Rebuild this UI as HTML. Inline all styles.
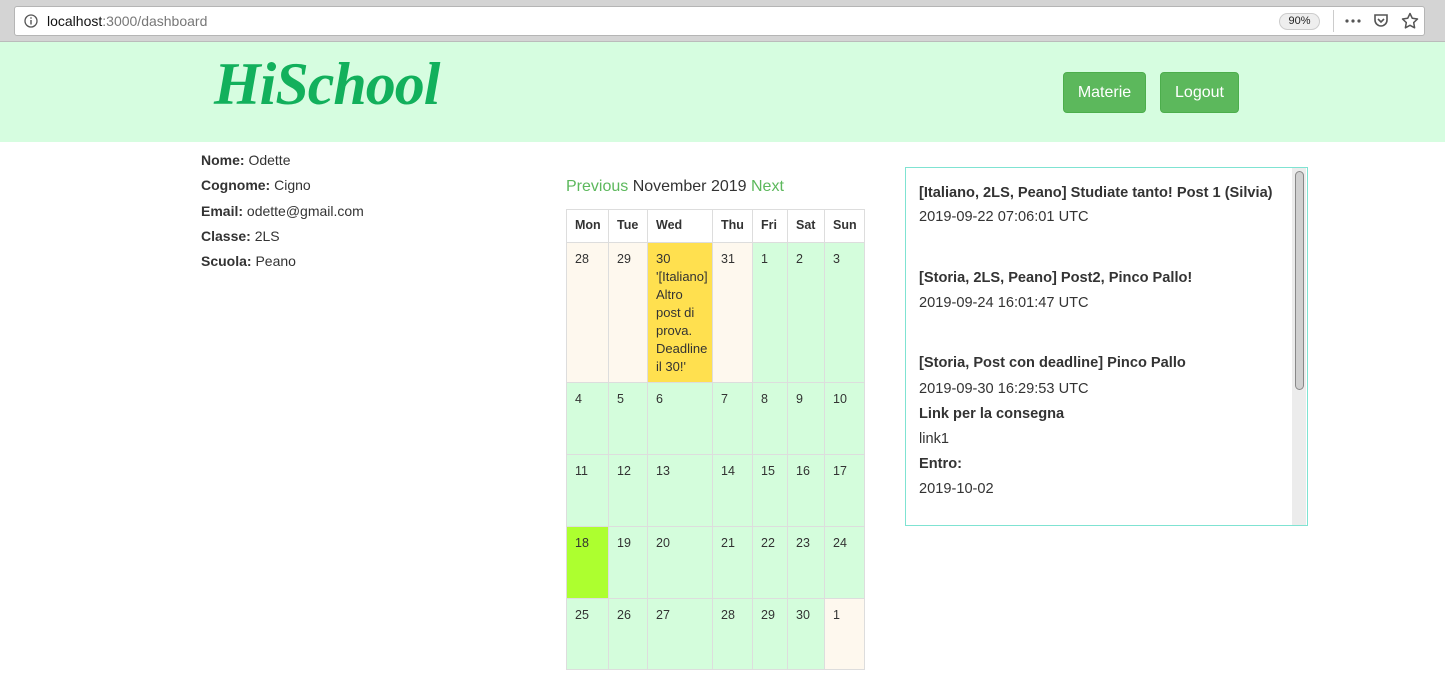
<!DOCTYPE html>
<html><head><meta charset="utf-8"><style>
*{margin:0;padding:0;box-sizing:border-box}
body{width:1445px;height:684px;overflow:hidden;background:#fff;font-family:"Liberation Sans",sans-serif;color:#333;position:relative}
.chrome{position:absolute;left:0;top:0;width:1445px;height:42px;background:#d4d4d4;border-bottom:1px solid #bbb}
.url{position:absolute;left:14px;top:6px;width:1411px;height:30px;background:#fff;border:1px solid #b5b5b5;border-radius:3px}
.hdr{position:absolute;left:0;top:42px;width:1445px;height:100px;background:#d6fde0}
.logo{position:absolute;left:214px;top:50px;font-family:"Liberation Serif",serif;font-style:italic;font-weight:bold;font-size:60px;color:#12b05c;letter-spacing:-1px}
.btn{position:absolute;top:72px;height:41px;background:#5cb85c;border:1px solid #4cae4c;border-radius:4px;color:#fff;font-size:16px;line-height:39px;text-align:center}
.info{position:absolute;left:201px;font-size:14px}
.c{position:absolute;border:1px solid #ddd;font-size:12.5px;line-height:18px;padding:7px 0 0 8px}
.h{font-weight:bold;padding-top:6px}
.o{background:#fef8ee}.g{background:#d4fddc}.y{background:#ffe04f}.t{background:#adff2f}
.panel{position:absolute;left:905px;top:167px;width:403px;height:359px;border:1px solid #7fe3d2;font-size:14.6px}
.panel div{position:absolute;left:13px}
.sb{position:absolute;left:1292px;top:168px;width:14px;height:357px;background:#ececec}
.th{position:absolute;left:1295px;top:171px;width:9px;height:219px;background:#d0d0d0;border:1px solid #888;border-radius:5px}
</style></head><body>
<div class="chrome"><div class="url">
<svg style="position:absolute;left:9px;top:7px" width="14" height="14" viewBox="0 0 14 14"><circle cx="7" cy="7" r="6" fill="none" stroke="#555" stroke-width="1.3"/><rect x="6.3" y="6" width="1.4" height="4.5" fill="#555"/><rect x="6.3" y="3.3" width="1.4" height="1.4" fill="#555"/></svg>
<span style="position:absolute;left:32px;top:6px;font-size:14px;color:#111">localhost<span style="color:#777">:3000/dashboard</span></span>
<span style="position:absolute;left:1264px;top:6px;width:41px;height:17px;border:1px solid #ccc;border-radius:9px;background:#eee;font-size:11px;text-align:center;line-height:15px;color:#222">90%</span>
<span style="position:absolute;left:1318px;top:3px;width:1px;height:22px;background:#ccc"></span>
<svg style="position:absolute;left:1330px;top:12px" width="16" height="4"><circle cx="2" cy="2" r="1.6" fill="#555"/><circle cx="8" cy="2" r="1.6" fill="#555"/><circle cx="14" cy="2" r="1.6" fill="#555"/></svg>
<svg style="position:absolute;left:1358px;top:6px" width="16" height="16" viewBox="0 0 16 16"><path d="M2 2h12v5a6 6 0 0 1-12 0z" fill="none" stroke="#555" stroke-width="1.6"/><path d="M5 6l3 3 3-3" fill="none" stroke="#555" stroke-width="1.6"/></svg>
<svg style="position:absolute;left:1386px;top:5px" width="18" height="18" viewBox="0 0 18 18"><path d="M9 1.5l2.3 4.8 5.2.7-3.8 3.6.9 5.2L9 13.3l-4.6 2.5.9-5.2L1.5 7l5.2-.7z" fill="none" stroke="#555" stroke-width="1.5" stroke-linejoin="round"/></svg>
</div></div>
<div class="hdr"></div>
<div class="logo">HiSchool</div>
<div class="btn" style="left:1063px;width:83px">Materie</div>
<div class="btn" style="left:1160px;width:79px">Logout</div>

<div class="info" style="top:152px"><b>Nome:</b> Odette</div>
<div class="info" style="top:177px"><b>Cognome:</b> Cigno</div>
<div class="info" style="top:203px"><b>Email:</b> odette@gmail.com</div>
<div class="info" style="top:228px"><b>Classe:</b> 2LS</div>
<div class="info" style="top:253px"><b>Scuola:</b> Peano</div>

<div style="position:absolute;left:566px;top:178px;font-size:16px"><span style="color:#5cb85c">Previous</span> November 2019 <span style="color:#5cb85c">Next</span></div>

<div class="c h" style="left:566px;top:209px;width:43px;height:34px">Mon</div>
<div class="c h" style="left:608px;top:209px;width:40px;height:34px">Tue</div>
<div class="c h" style="left:647px;top:209px;width:66px;height:34px">Wed</div>
<div class="c h" style="left:712px;top:209px;width:41px;height:34px">Thu</div>
<div class="c h" style="left:752px;top:209px;width:36px;height:34px">Fri</div>
<div class="c h" style="left:787px;top:209px;width:38px;height:34px">Sat</div>
<div class="c h" style="left:824px;top:209px;width:41px;height:34px">Sun</div>

<div class="c o" style="left:566px;top:242px;width:43px;height:141px">28</div>
<div class="c o" style="left:608px;top:242px;width:40px;height:141px">29</div>
<div class="c y" style="left:647px;top:242px;width:66px;height:141px;font-size:13px;padding-right:4px">30<br>'[Italiano] Altro post di prova. Deadline il 30!'</div>
<div class="c o" style="left:712px;top:242px;width:41px;height:141px">31</div>
<div class="c g" style="left:752px;top:242px;width:36px;height:141px">1</div>
<div class="c g" style="left:787px;top:242px;width:38px;height:141px">2</div>
<div class="c g" style="left:824px;top:242px;width:41px;height:141px">3</div>

<div class="c g" style="left:566px;top:382px;width:43px;height:73px">4</div>
<div class="c g" style="left:608px;top:382px;width:40px;height:73px">5</div>
<div class="c g" style="left:647px;top:382px;width:66px;height:73px">6</div>
<div class="c g" style="left:712px;top:382px;width:41px;height:73px">7</div>
<div class="c g" style="left:752px;top:382px;width:36px;height:73px">8</div>
<div class="c g" style="left:787px;top:382px;width:38px;height:73px">9</div>
<div class="c g" style="left:824px;top:382px;width:41px;height:73px">10</div>

<div class="c g" style="left:566px;top:454px;width:43px;height:73px">11</div>
<div class="c g" style="left:608px;top:454px;width:40px;height:73px">12</div>
<div class="c g" style="left:647px;top:454px;width:66px;height:73px">13</div>
<div class="c g" style="left:712px;top:454px;width:41px;height:73px">14</div>
<div class="c g" style="left:752px;top:454px;width:36px;height:73px">15</div>
<div class="c g" style="left:787px;top:454px;width:38px;height:73px">16</div>
<div class="c g" style="left:824px;top:454px;width:41px;height:73px">17</div>

<div class="c t" style="left:566px;top:526px;width:43px;height:73px">18</div>
<div class="c g" style="left:608px;top:526px;width:40px;height:73px">19</div>
<div class="c g" style="left:647px;top:526px;width:66px;height:73px">20</div>
<div class="c g" style="left:712px;top:526px;width:41px;height:73px">21</div>
<div class="c g" style="left:752px;top:526px;width:36px;height:73px">22</div>
<div class="c g" style="left:787px;top:526px;width:38px;height:73px">23</div>
<div class="c g" style="left:824px;top:526px;width:41px;height:73px">24</div>

<div class="c g" style="left:566px;top:598px;width:43px;height:72px">25</div>
<div class="c g" style="left:608px;top:598px;width:40px;height:72px">26</div>
<div class="c g" style="left:647px;top:598px;width:66px;height:72px">27</div>
<div class="c g" style="left:712px;top:598px;width:41px;height:72px">28</div>
<div class="c g" style="left:752px;top:598px;width:36px;height:72px">29</div>
<div class="c g" style="left:787px;top:598px;width:38px;height:72px">30</div>
<div class="c o" style="left:824px;top:598px;width:41px;height:72px">1</div>

<div class="panel">
<div style="top:17px;font-weight:bold">[Italiano, 2LS, Peano] Studiate tanto! Post 1 (Silvia)</div>
<div style="top:41px">2019-09-22 07:06:01 UTC</div>
<div style="top:102px;font-weight:bold">[Storia, 2LS, Peano] Post2, Pinco Pallo!</div>
<div style="top:127px">2019-09-24 16:01:47 UTC</div>
<div style="top:187px;font-weight:bold">[Storia, Post con deadline] Pinco Pallo</div>
<div style="top:213px">2019-09-30 16:29:53 UTC</div>
<div style="top:238px;font-weight:bold">Link per la consegna</div>
<div style="top:263px">link1</div>
<div style="top:288px;font-weight:bold">Entro:</div>
<div style="top:313px">2019-10-02</div>
</div>
<div class="sb"></div><div class="th"></div>
</body></html>
